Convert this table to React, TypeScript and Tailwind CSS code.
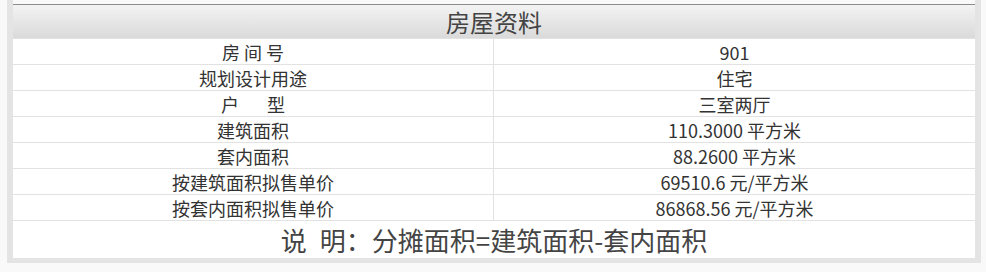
import React from "react";

const rows: [string, string][] = [
  ["房 间 号", "901"],
  ["规划设计用途", "住宅"],
  ["户\u00a0\u00a0\u00a0\u00a0\u00a0\u00a0\u00a0型", "三室两厅"],
  ["建筑面积", "110.3000 平方米"],
  ["套内面积", "88.2600 平方米"],
  ["按建筑面积拟售单价", "69510.6 元/平方米"],
  ["按套内面积拟售单价", "86868.56 元/平方米"],
];

export default function App() {
  return (
    <div
      className="w-[986px] h-[272px] bg-[#f9f9f9] overflow-hidden"
      style={{ fontFamily: '"Noto Sans CJK SC", "Noto Sans", sans-serif' }}
    >
      <div className="ml-[7px] w-[974px] border-x-[6px] border-b-[5px] border-[#e4e4e4] pt-[4px]">
        <div className="bg-white">
          <div className="h-[34px] border-t border-[#8c8c8c] bg-gradient-to-b from-[#f3f3f3] to-[#dadada] flex items-center justify-center text-[24px] leading-none text-[#444]">
            房屋资料
          </div>
          {rows.map(([k, v]) => (
            <div key={k} className="grid grid-cols-2 h-[26px] border-t border-[#e2e2e2] text-[18px] leading-none text-[#333]">
              <div className="flex items-center justify-center border-r border-[#e2e2e2] whitespace-pre">{k}</div>
              <div className="flex items-center justify-center">{v}</div>
            </div>
          ))}
          <div className="h-[38px] border-t border-[#e2e2e2] flex items-center justify-center text-[26px] leading-none text-[#444] whitespace-pre">
            {"说\u2002明：分摊面积=建筑面积-套内面积"}
          </div>
        </div>
      </div>
    </div>
  );
}
